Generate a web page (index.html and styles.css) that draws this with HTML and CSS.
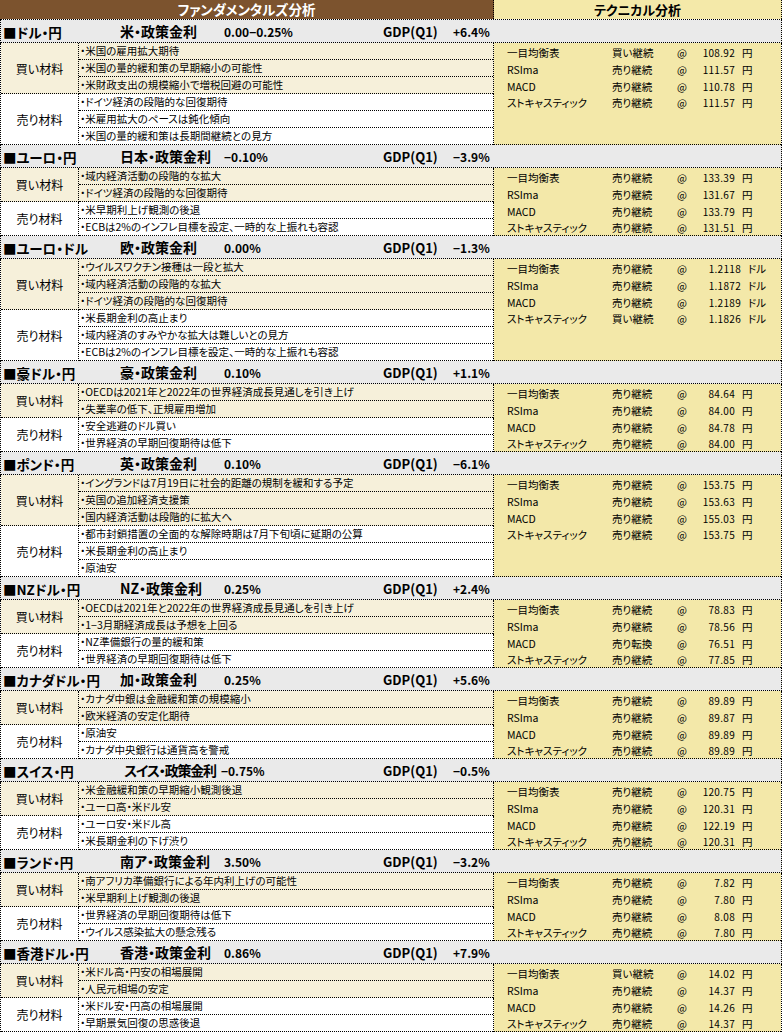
FILE: index.html
```html
<!DOCTYPE html>
<html lang="ja">
<head>
<meta charset="utf-8">
<title>ファンダメンタルズ分析・テクニカル分析</title>
<link rel="stylesheet" href="styles.css">
</head>
<body>
<div class="sheet">
  <div class="head">
    <div class="head-fund">ファンダメンタルズ分析</div>
    <div class="head-tech">テクニカル分析</div>
  </div>

  <!-- 1 -->
  <div class="title">
    <span class="name">■ドル・円</span>
    <span class="policy"><span class="plabel">米・政策金利</span><span class="pval">0.00−0.25%</span></span>
    <span class="gdp">GDP(Q1)</span>
    <span class="gval">+6.4%</span>
  </div>
  <div class="body">
    <div class="fund">
      <div class="group buy">
        <div class="glabel">買い材料</div>
        <div class="items">
          <div class="item">・米国の雇用拡大期待</div>
          <div class="item">・米国の量的緩和策の早期縮小の可能性</div>
          <div class="item">・米財政支出の規模縮小で増税回避の可能性</div>
        </div>
      </div>
      <div class="group sell">
        <div class="glabel">売り材料</div>
        <div class="items">
          <div class="item">・ドイツ経済の段階的な回復期待</div>
          <div class="item">・米雇用拡大のペースは鈍化傾向</div>
          <div class="item">・米国の量的緩和策は長期間継続との見方</div>
        </div>
      </div>
    </div>
    <div class="tech">
      <div class="trow"><span class="tname">一目均衡表</span><span class="tsig">買い継続</span><span class="tat">@</span><span class="tval">108.92</span><span class="tunit">円</span></div>
      <div class="trow"><span class="tname">RSIma</span><span class="tsig">売り継続</span><span class="tat">@</span><span class="tval">111.57</span><span class="tunit">円</span></div>
      <div class="trow"><span class="tname">MACD</span><span class="tsig">売り継続</span><span class="tat">@</span><span class="tval">110.78</span><span class="tunit">円</span></div>
      <div class="trow"><span class="tname">ストキャスティック</span><span class="tsig">売り継続</span><span class="tat">@</span><span class="tval">111.57</span><span class="tunit">円</span></div>
    </div>
  </div>

  <!-- 2 -->
  <div class="title">
    <span class="name">■ユーロ・円</span>
    <span class="policy"><span class="plabel">日本・政策金利</span><span class="pval">−0.10%</span></span>
    <span class="gdp">GDP(Q1)</span>
    <span class="gval">−3.9%</span>
  </div>
  <div class="body">
    <div class="fund">
      <div class="group buy">
        <div class="glabel">買い材料</div>
        <div class="items">
          <div class="item">・域内経済活動の段階的な拡大</div>
          <div class="item">・ドイツ経済の段階的な回復期待</div>
        </div>
      </div>
      <div class="group sell">
        <div class="glabel">売り材料</div>
        <div class="items">
          <div class="item">・米早期利上げ観測の後退</div>
          <div class="item">・ECBは2%のインフレ目標を設定、一時的な上振れも容認</div>
        </div>
      </div>
    </div>
    <div class="tech">
      <div class="trow"><span class="tname">一目均衡表</span><span class="tsig">売り継続</span><span class="tat">@</span><span class="tval">133.39</span><span class="tunit">円</span></div>
      <div class="trow"><span class="tname">RSIma</span><span class="tsig">売り継続</span><span class="tat">@</span><span class="tval">131.67</span><span class="tunit">円</span></div>
      <div class="trow"><span class="tname">MACD</span><span class="tsig">売り継続</span><span class="tat">@</span><span class="tval">133.79</span><span class="tunit">円</span></div>
      <div class="trow"><span class="tname">ストキャスティック</span><span class="tsig">売り継続</span><span class="tat">@</span><span class="tval">131.51</span><span class="tunit">円</span></div>
    </div>
  </div>

  <!-- 3 -->
  <div class="title">
    <span class="name">■ユーロ・ドル</span>
    <span class="policy"><span class="plabel">欧・政策金利</span><span class="pval">0.00%</span></span>
    <span class="gdp">GDP(Q1)</span>
    <span class="gval">−1.3%</span>
  </div>
  <div class="body">
    <div class="fund">
      <div class="group buy">
        <div class="glabel">買い材料</div>
        <div class="items">
          <div class="item">・ウイルスワクチン接種は一段と拡大</div>
          <div class="item">・域内経済活動の段階的な拡大</div>
          <div class="item">・ドイツ経済の段階的な回復期待</div>
        </div>
      </div>
      <div class="group sell">
        <div class="glabel">売り材料</div>
        <div class="items">
          <div class="item">・米長期金利の高止まり</div>
          <div class="item">・域内経済のすみやかな拡大は難しいとの見方</div>
          <div class="item">・ECBは2%のインフレ目標を設定、一時的な上振れも容認</div>
        </div>
      </div>
    </div>
    <div class="tech usd">
      <div class="trow"><span class="tname">一目均衡表</span><span class="tsig">売り継続</span><span class="tat">@</span><span class="tval">1.2118</span><span class="tunit">ドル</span></div>
      <div class="trow"><span class="tname">RSIma</span><span class="tsig">売り継続</span><span class="tat">@</span><span class="tval">1.1872</span><span class="tunit">ドル</span></div>
      <div class="trow"><span class="tname">MACD</span><span class="tsig">売り継続</span><span class="tat">@</span><span class="tval">1.2189</span><span class="tunit">ドル</span></div>
      <div class="trow"><span class="tname">ストキャスティック</span><span class="tsig">買い継続</span><span class="tat">@</span><span class="tval">1.1826</span><span class="tunit">ドル</span></div>
    </div>
  </div>

  <!-- 4 -->
  <div class="title">
    <span class="name">■豪ドル・円</span>
    <span class="policy"><span class="plabel">豪・政策金利</span><span class="pval">0.10%</span></span>
    <span class="gdp">GDP(Q1)</span>
    <span class="gval">+1.1%</span>
  </div>
  <div class="body">
    <div class="fund">
      <div class="group buy">
        <div class="glabel">買い材料</div>
        <div class="items">
          <div class="item">・OECDは2021年と2022年の世界経済成長見通しを引き上げ</div>
          <div class="item">・失業率の低下、正規雇用増加</div>
        </div>
      </div>
      <div class="group sell">
        <div class="glabel">売り材料</div>
        <div class="items">
          <div class="item">・安全逃避のドル買い</div>
          <div class="item">・世界経済の早期回復期待は低下</div>
        </div>
      </div>
    </div>
    <div class="tech">
      <div class="trow"><span class="tname">一目均衡表</span><span class="tsig">売り継続</span><span class="tat">@</span><span class="tval">84.64</span><span class="tunit">円</span></div>
      <div class="trow"><span class="tname">RSIma</span><span class="tsig">売り継続</span><span class="tat">@</span><span class="tval">84.00</span><span class="tunit">円</span></div>
      <div class="trow"><span class="tname">MACD</span><span class="tsig">売り継続</span><span class="tat">@</span><span class="tval">84.78</span><span class="tunit">円</span></div>
      <div class="trow"><span class="tname">ストキャスティック</span><span class="tsig">売り継続</span><span class="tat">@</span><span class="tval">84.00</span><span class="tunit">円</span></div>
    </div>
  </div>

  <!-- 5 -->
  <div class="title">
    <span class="name">■ポンド・円</span>
    <span class="policy"><span class="plabel">英・政策金利</span><span class="pval">0.10%</span></span>
    <span class="gdp">GDP(Q1)</span>
    <span class="gval">−6.1%</span>
  </div>
  <div class="body">
    <div class="fund">
      <div class="group buy">
        <div class="glabel">買い材料</div>
        <div class="items">
          <div class="item">・イングランドは7月19日に社会的距離の規制を緩和する予定</div>
          <div class="item">・英国の追加経済支援策</div>
          <div class="item">・国内経済活動は段階的に拡大へ</div>
        </div>
      </div>
      <div class="group sell">
        <div class="glabel">売り材料</div>
        <div class="items">
          <div class="item">・都市封鎖措置の全面的な解除時期は7月下旬頃に延期の公算</div>
          <div class="item">・米長期金利の高止まり</div>
          <div class="item">・原油安</div>
        </div>
      </div>
    </div>
    <div class="tech">
      <div class="trow"><span class="tname">一目均衡表</span><span class="tsig">売り継続</span><span class="tat">@</span><span class="tval">153.75</span><span class="tunit">円</span></div>
      <div class="trow"><span class="tname">RSIma</span><span class="tsig">売り継続</span><span class="tat">@</span><span class="tval">153.63</span><span class="tunit">円</span></div>
      <div class="trow"><span class="tname">MACD</span><span class="tsig">売り継続</span><span class="tat">@</span><span class="tval">155.03</span><span class="tunit">円</span></div>
      <div class="trow"><span class="tname">ストキャスティック</span><span class="tsig">売り継続</span><span class="tat">@</span><span class="tval">153.75</span><span class="tunit">円</span></div>
    </div>
  </div>

  <!-- 6 -->
  <div class="title">
    <span class="name">■NZドル・円</span>
    <span class="policy"><span class="plabel">NZ・政策金利</span><span class="pval">0.25%</span></span>
    <span class="gdp">GDP(Q1)</span>
    <span class="gval">+2.4%</span>
  </div>
  <div class="body">
    <div class="fund">
      <div class="group buy">
        <div class="glabel">買い材料</div>
        <div class="items">
          <div class="item">・OECDは2021年と2022年の世界経済成長見通しを引き上げ</div>
          <div class="item">・1−3月期経済成長は予想を上回る</div>
        </div>
      </div>
      <div class="group sell">
        <div class="glabel">売り材料</div>
        <div class="items">
          <div class="item">・NZ準備銀行の量的緩和策</div>
          <div class="item">・世界経済の早期回復期待は低下</div>
        </div>
      </div>
    </div>
    <div class="tech">
      <div class="trow"><span class="tname">一目均衡表</span><span class="tsig">売り継続</span><span class="tat">@</span><span class="tval">78.83</span><span class="tunit">円</span></div>
      <div class="trow"><span class="tname">RSIma</span><span class="tsig">売り継続</span><span class="tat">@</span><span class="tval">78.56</span><span class="tunit">円</span></div>
      <div class="trow"><span class="tname">MACD</span><span class="tsig">売り転換</span><span class="tat">@</span><span class="tval">76.51</span><span class="tunit">円</span></div>
      <div class="trow"><span class="tname">ストキャスティック</span><span class="tsig">売り継続</span><span class="tat">@</span><span class="tval">77.85</span><span class="tunit">円</span></div>
    </div>
  </div>

  <!-- 7 -->
  <div class="title">
    <span class="name">■カナダドル・円</span>
    <span class="policy"><span class="plabel">加・政策金利</span><span class="pval">0.25%</span></span>
    <span class="gdp">GDP(Q1)</span>
    <span class="gval">+5.6%</span>
  </div>
  <div class="body">
    <div class="fund">
      <div class="group buy">
        <div class="glabel">買い材料</div>
        <div class="items">
          <div class="item">・カナダ中銀は金融緩和策の規模縮小</div>
          <div class="item">・欧米経済の安定化期待</div>
        </div>
      </div>
      <div class="group sell">
        <div class="glabel">売り材料</div>
        <div class="items">
          <div class="item">・原油安</div>
          <div class="item">・カナダ中央銀行は通貨高を警戒</div>
        </div>
      </div>
    </div>
    <div class="tech">
      <div class="trow"><span class="tname">一目均衡表</span><span class="tsig">売り継続</span><span class="tat">@</span><span class="tval">89.89</span><span class="tunit">円</span></div>
      <div class="trow"><span class="tname">RSIma</span><span class="tsig">売り継続</span><span class="tat">@</span><span class="tval">89.87</span><span class="tunit">円</span></div>
      <div class="trow"><span class="tname">MACD</span><span class="tsig">売り継続</span><span class="tat">@</span><span class="tval">89.89</span><span class="tunit">円</span></div>
      <div class="trow"><span class="tname">ストキャスティック</span><span class="tsig">売り継続</span><span class="tat">@</span><span class="tval">89.89</span><span class="tunit">円</span></div>
    </div>
  </div>

  <!-- 8 -->
  <div class="title">
    <span class="name">■スイス・円</span>
    <span class="policy"><span class="plabel plabel-tight">スイス・政策金利</span><span class="pval">−0.75%</span></span>
    <span class="gdp">GDP(Q1)</span>
    <span class="gval">−0.5%</span>
  </div>
  <div class="body">
    <div class="fund">
      <div class="group buy">
        <div class="glabel">買い材料</div>
        <div class="items">
          <div class="item">・米金融緩和策の早期縮小観測後退</div>
          <div class="item">・ユーロ高・米ドル安</div>
        </div>
      </div>
      <div class="group sell">
        <div class="glabel">売り材料</div>
        <div class="items">
          <div class="item">・ユーロ安・米ドル高</div>
          <div class="item">・米長期金利の下げ渋り</div>
        </div>
      </div>
    </div>
    <div class="tech">
      <div class="trow"><span class="tname">一目均衡表</span><span class="tsig">売り継続</span><span class="tat">@</span><span class="tval">120.75</span><span class="tunit">円</span></div>
      <div class="trow"><span class="tname">RSIma</span><span class="tsig">売り継続</span><span class="tat">@</span><span class="tval">120.31</span><span class="tunit">円</span></div>
      <div class="trow"><span class="tname">MACD</span><span class="tsig">売り継続</span><span class="tat">@</span><span class="tval">122.19</span><span class="tunit">円</span></div>
      <div class="trow"><span class="tname">ストキャスティック</span><span class="tsig">売り継続</span><span class="tat">@</span><span class="tval">120.31</span><span class="tunit">円</span></div>
    </div>
  </div>

  <!-- 9 -->
  <div class="title">
    <span class="name">■ランド・円</span>
    <span class="policy"><span class="plabel">南ア・政策金利</span><span class="pval">3.50%</span></span>
    <span class="gdp">GDP(Q1)</span>
    <span class="gval">−3.2%</span>
  </div>
  <div class="body">
    <div class="fund">
      <div class="group buy">
        <div class="glabel">買い材料</div>
        <div class="items">
          <div class="item">・南アフリカ準備銀行による年内利上げの可能性</div>
          <div class="item">・米早期利上げ観測の後退</div>
        </div>
      </div>
      <div class="group sell">
        <div class="glabel">売り材料</div>
        <div class="items">
          <div class="item">・世界経済の早期回復期待は低下</div>
          <div class="item">・ウイルス感染拡大の懸念残る</div>
        </div>
      </div>
    </div>
    <div class="tech">
      <div class="trow"><span class="tname">一目均衡表</span><span class="tsig">売り継続</span><span class="tat">@</span><span class="tval">7.82</span><span class="tunit">円</span></div>
      <div class="trow"><span class="tname">RSIma</span><span class="tsig">売り継続</span><span class="tat">@</span><span class="tval">7.80</span><span class="tunit">円</span></div>
      <div class="trow"><span class="tname">MACD</span><span class="tsig">売り継続</span><span class="tat">@</span><span class="tval">8.08</span><span class="tunit">円</span></div>
      <div class="trow"><span class="tname">ストキャスティック</span><span class="tsig">売り継続</span><span class="tat">@</span><span class="tval">7.80</span><span class="tunit">円</span></div>
    </div>
  </div>

  <!-- 10 -->
  <div class="title">
    <span class="name">■香港ドル・円</span>
    <span class="policy"><span class="plabel">香港・政策金利</span><span class="pval">0.86%</span></span>
    <span class="gdp">GDP(Q1)</span>
    <span class="gval">+7.9%</span>
  </div>
  <div class="body">
    <div class="fund">
      <div class="group buy">
        <div class="glabel">買い材料</div>
        <div class="items">
          <div class="item">・米ドル高・円安の相場展開</div>
          <div class="item">・人民元相場の安定</div>
        </div>
      </div>
      <div class="group sell">
        <div class="glabel">売り材料</div>
        <div class="items">
          <div class="item">・米ドル安・円高の相場展開</div>
          <div class="item">・早期景気回復の思惑後退</div>
        </div>
      </div>
    </div>
    <div class="tech">
      <div class="trow"><span class="tname">一目均衡表</span><span class="tsig">買い継続</span><span class="tat">@</span><span class="tval">14.02</span><span class="tunit">円</span></div>
      <div class="trow"><span class="tname">RSIma</span><span class="tsig">売り継続</span><span class="tat">@</span><span class="tval">14.37</span><span class="tunit">円</span></div>
      <div class="trow"><span class="tname">MACD</span><span class="tsig">売り継続</span><span class="tat">@</span><span class="tval">14.26</span><span class="tunit">円</span></div>
      <div class="trow"><span class="tname">ストキャスティック</span><span class="tsig">売り継続</span><span class="tat">@</span><span class="tval">14.37</span><span class="tunit">円</span></div>
    </div>
  </div>
</div>
</body>
</html>
```

FILE: styles.css
```css
* {
  box-sizing: border-box;
  margin: 0;
  padding: 0;
}

body {
  width: 783px;
  background: #ffffff;
  color: #000000;
  font-family: "Noto Sans CJK JP", "Noto Sans", sans-serif;
  font-feature-settings: "palt" 1;
  font-size: 11px;
}

.sheet {
  width: 782px;
}

/* header band */
.head {
  display: flex;
  height: 20px;
  border-bottom: 1px dotted #000;
}

.head-fund {
  width: 494px;
  background: #7c532e;
  color: #ffffff;
  font-weight: bold;
  font-size: 13.5px;
  line-height: 19px;
  text-align: center;
  border-right: 1px dotted #000;
}

.head-tech {
  flex: 1;
  background: #f4e9a9;
  font-weight: bold;
  font-size: 13px;
  line-height: 19px;
  text-align: center;
  border-right: 1px dotted #000;
}

/* section title row */
.title {
  display: grid;
  grid-template-columns: 119px 263px 70px 1fr;
  height: 23px;
  align-items: center;
  background: #eaeaea;
  border-left: 1px dotted #000;
  border-right: 1px dotted #000;
  border-bottom: 1px dotted #000;
  font-weight: bold;
  font-size: 13.5px;
  line-height: 22px;
  white-space: nowrap;
}

.name {
  padding-left: 2px;
}

.policy {
  display: flex;
  align-items: baseline;
}

.plabel {
  min-width: 103px;
  font-size: 14px;
}

.plabel-tight {
  min-width: 0;
  letter-spacing: -1.2px;
  margin-left: 4px;
}

.pval {
  font-size: 12px;
  margin-left: 1px;
}

.plabel-tight + .pval {
  margin-left: 5px;
}

.gdp {
  font-size: 13px;
}

.gval {
  font-size: 12px;
}

/* section body */
.body {
  display: flex;
  border-left: 1px dotted #000;
  border-right: 1px dotted #000;
}

.fund {
  width: 493px;
  flex: none;
}

.group {
  display: flex;
}

.group.buy {
  background: #f6f0da;
}

.group.sell {
  background: #ffffff;
}

.glabel {
  width: 78px;
  flex: none;
  display: flex;
  align-items: center;
  justify-content: center;
  font-size: 12px;
  border-right: 1px dotted #000;
  border-bottom: 1px dotted #000;
}

.items {
  flex: 1;
  border-right: 1px dotted #000;
}

.item {
  height: 17px;
  line-height: 16px;
  padding-left: 1px;
  border-bottom: 1px dotted #000;
  font-size: 10.5px;
  white-space: nowrap;
}

/* technical panel: sized by the fundamentals column, not by its own rows */
.tech {
  flex: 1;
  contain: size;
  background: #f3e8a9;
  border-bottom: 1px dotted #000;
  padding: 2px 0 0 13px;
}

.trow {
  display: grid;
  grid-template-columns: 105px 65px 20px 38px auto;
  height: 16.8px;
  line-height: 16px;
  font-size: 10.5px;
  white-space: nowrap;
}

.tval {
  text-align: right;
  letter-spacing: 0.3px;
  font-size: 10px;
}

.tunit {
  padding-left: 7px;
}

.usd .trow {
  grid-template-columns: 105px 65px 20px 44px auto;
}
```
